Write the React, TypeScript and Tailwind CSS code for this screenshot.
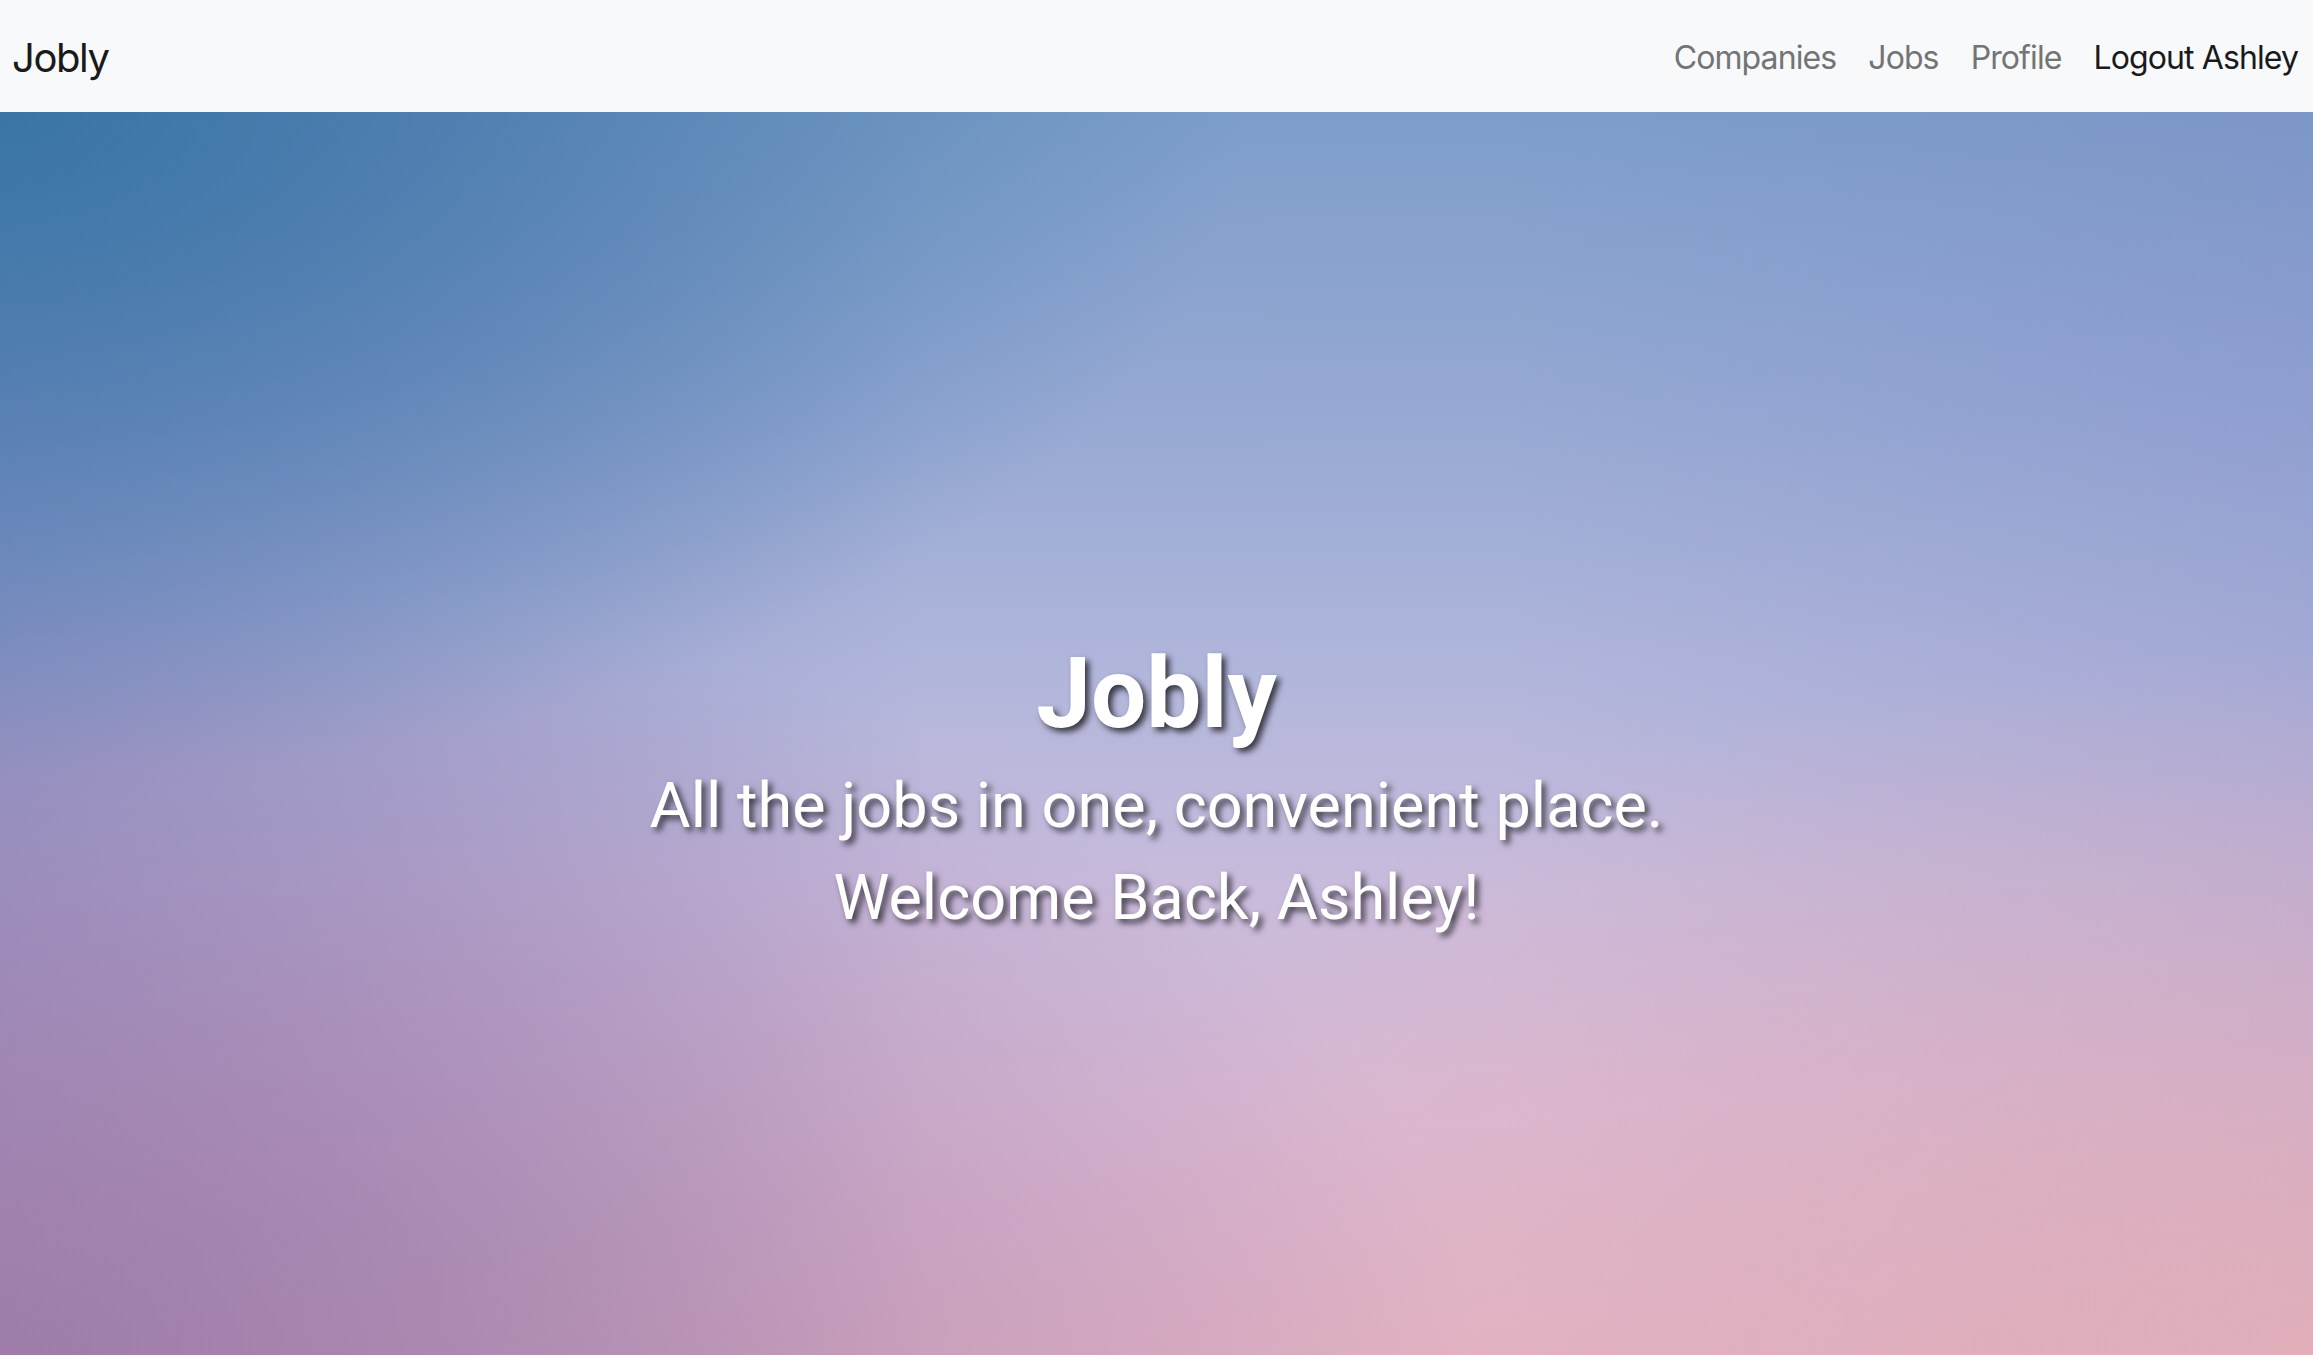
import React from "react";

const navLinks = [
  { label: "Companies", href: "/companies" },
  { label: "Jobs", href: "/jobs" },
  { label: "Profile", href: "/profile" },
];

function Navbar() {
  return (
    <nav className="flex items-center justify-between h-[112px] bg-[#f8f9fa] pl-[12px] pr-[15px] pt-[3px] font-['Inter',sans-serif]">
      {/* Brand */}
      <a href="/" className="text-[40px] leading-none text-[#1a1a1a] tracking-[-0.035em]">
        Jobly
      </a>

      {/* Links */}
      <ul className="flex items-center gap-8 text-[32px] leading-none tracking-[-0.028em]">
        {navLinks.map((l) => (
          <li key={l.label}>
            <a href={l.href} className="text-[#737475] hover:text-[#4d4d4d]">
              {l.label}
            </a>
          </li>
        ))}
        <li>
          <a href="/" className="text-[#1a1a1a]">
            Logout Ashley
          </a>
        </li>
      </ul>
    </nav>
  );
}

function Hero() {
  return (
    <div className="h-[1243px] w-full overflow-hidden [background-image:radial-gradient(ellipse_at_0%_0%,rgba(55,116,165,0.95)_0%,rgba(55,116,165,0)_38%),radial-gradient(ellipse_at_0%_100%,rgba(158,122,167,0.9)_0%,rgba(158,122,167,0)_45%),radial-gradient(ellipse_at_100%_100%,rgba(230,176,184,0.85)_0%,rgba(230,176,184,0)_40%),linear-gradient(90deg,rgba(85,100,170,0.4)_0%,rgba(85,100,170,0)_40%,rgba(120,125,195,0)_65%,rgba(120,125,195,0.22)_100%),linear-gradient(180deg,#7d9ec9_0%,#97a9d4_25%,#b1b6db_45%,#c8bbdc_62%,#d8b9d5_80%,#e0b3c6_100%)]">
      <div className="flex flex-col items-center pt-[523px] text-white font-['Roboto',sans-serif] text-center">
        <h1 className="text-[98px] leading-[1.2] font-bold mb-[15px] [text-shadow:4px_4px_6px_rgba(0,0,0,0.7)]">
          Jobly
        </h1>
        <p className="text-[63px] leading-[1.2] mb-[17px] [text-shadow:4px_4px_6px_rgba(0,0,0,0.7)]">
          All the jobs in one, convenient place.
        </p>
        <h2 className="text-[63px] leading-[1.2] [text-shadow:4px_4px_6px_rgba(0,0,0,0.7)]">
          Welcome Back, Ashley!
        </h2>
      </div>
    </div>
  );
}

export default function App() {
  return (
    <div className="w-full min-h-screen">
      <Navbar />
      <Hero />
    </div>
  );
}
